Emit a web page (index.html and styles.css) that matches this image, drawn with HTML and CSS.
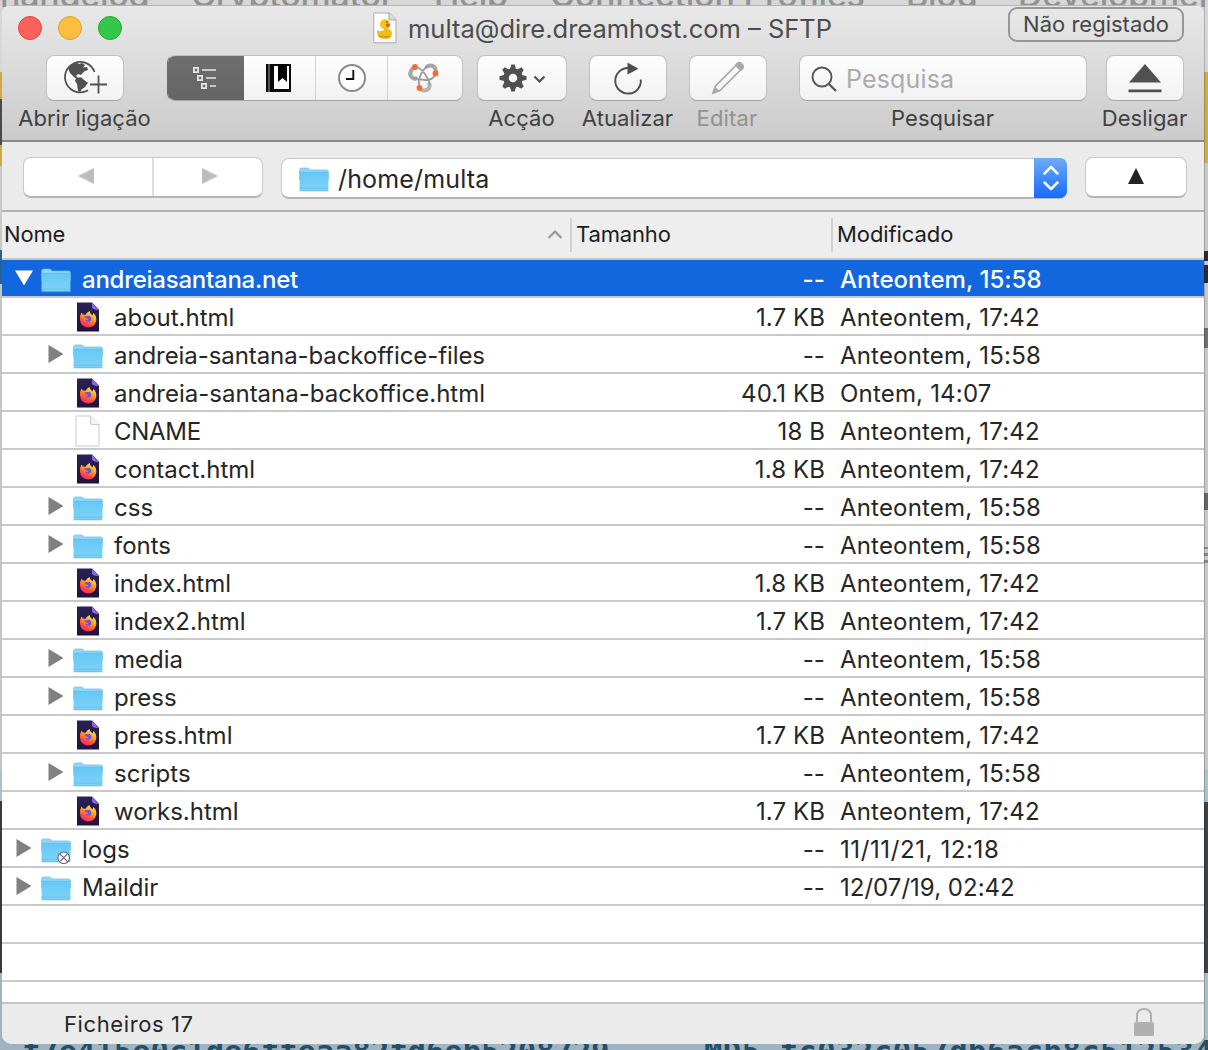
FILE: index.html
```html
<!DOCTYPE html>
<html lang="pt">
<head>
<meta charset="utf-8">
<title>multa@dire.dreamhost.com – SFTP</title>
<link rel="stylesheet" href="styles.css">
</head>
<body>
<svg class="defs" aria-hidden="true">
  <defs>
    <linearGradient id="folderFill" x1="0" y1="0" x2="0" y2="1"><stop offset="0" stop-color="#65c8f6"/><stop offset="1" stop-color="#7fd3f8"/></linearGradient>
    <linearGradient id="fire" x1="0.8" y1="0" x2="0.3" y2="1"><stop offset="0" stop-color="#fff04a"/><stop offset=".45" stop-color="#ff9a22"/><stop offset=".75" stop-color="#ff4a42"/><stop offset="1" stop-color="#ed247c"/></linearGradient>
    <linearGradient id="night" x1="0" y1="0" x2="0" y2="1"><stop offset="0" stop-color="#2b2157"/><stop offset="1" stop-color="#20123a"/></linearGradient>
    <symbol id="folder" viewBox="0 0 32 26">
      <path d="M1 3q0-2 2-2h6q1.500 0 2.300 1.200l.7.800h17q2 0 2 2v8H1z" fill="#8fd6f8" stroke="#62b7e2" stroke-width=".6"/>
      <path d="M1 5.500h30V23.500q0 1-1 1H2q-1 0-1-1z" fill="url(#folderFill)"/>
      <path d="M1 5.500h30M1 22h30" stroke="#5dbbe8" stroke-width=".7"/>
      <path d="M1 24.700h30" stroke="#4eabd9" stroke-width=".9"/>
    </symbol>
    <symbol id="firefox" viewBox="0 0 24 30">
      <path d="M1 .5h15l7 7v22H1z" fill="url(#night)"/>
      <path d="M16 .5l7 7.500q-5 0-7-2z" fill="#8d62e8"/>
      <path d="M4 17.500Q3.800 13 5.500 10.500l1.500 2 2.500.3Q11 10 13.500 9q.2 2.500 3 4.500l1-2.500q3.500 3.500 2.700 8-1.700 6.500-8.200 6.500-7.500-.5-8-8" fill="url(#fire)"/>
      <path d="M8.500 15q1.500-1.500 3.500-.7l1.500-.5q2.300 1.200 1.800 3.700-.8 2.700-3.800 2.200-1.700-.5-2-2 1.800.6 2.800-.8L9 16z" fill="#7850d8"/>
    </symbol>
    <symbol id="blank" viewBox="0 0 26 32">
      <path d="M2 1h13.500l8.500 8.500V30q0 1-1 1H2q-1 0-1-1V2q0-1 1-1z" fill="#fff" stroke="#c9c9c9" stroke-width="1"/>
      <path d="M15.500 1v7q0 1.500 1.500 1.500h7" fill="#f5f5f5" stroke="#c9c9c9"/>
    </symbol>
    <symbol id="right" viewBox="0 0 16 20"><path d="M.5 1l15 9-15 9z" fill="#808080"/></symbol>
    <symbol id="down" viewBox="0 0 18 16"><path d="M0 .5h18L9 15.500z" fill="#fff"/></symbol>
  </defs>
</svg>

<div class="backdrop">
  <div class="edge"></div>
  <div class="menu"><span class="m1">hangelog</span><span class="m2">Cryptomator</span><span class="m3">Help</span><span class="m4">Connection Profiles</span><span class="m5">Blog</span><span class="m6">Development</span></div>
  <div class="hash"><span class="h1">f7e415e0c1de6ffeaa82fd6eb5208729</span><span class="h2">MD5 fc032c057db6acb8c512534</span></div>
</div>

<main class="window">
  <header class="chrome">
    <div class="titlebar">
      <div class="lights"><i class="red"></i><i class="yellow"></i><i class="green"></i></div>
      <div class="title">
        <svg width="24" height="32" viewBox="0 0 24 32"><path d="M.8 1h15.700L23 7.500v23.300H.8z" fill="#fcfcfc" stroke="#aaa"/><path d="M16 1v7h7" fill="#ddd" stroke="#999" stroke-width=".8"/><circle cx="12" cy="12.200" r="5" fill="#f4c51c"/><path d="M4 18q-.5 9 8 9 7.500 0 7-6-.5-3-4-4.500l-3.500-.5-1 2.500q-4 1.500-6.500-.5z" fill="#f1bd18"/><path d="M5.500 23.500q4 3 11.500.5" stroke="#d58c0c" stroke-width="1.300" fill="none"/><path d="M12.500 12q3-1 4.800.5-.8 3-3.500 3z" fill="#ed5c1c"/><circle cx="14" cy="10" r=".8" fill="#332"/></svg>
        <span class="title-text">multa@dire.dreamhost.com – SFTP</span>
      </div>
      <span class="badge">Não registado</span>
    </div>
    <div class="toolbar">
      <div class="tool t-open"><div class="btn">
        <svg width="46" height="36" viewBox="0 0 46 36"><path d="M32.500 12A15.200 15.200 0 1 0 26 30.200" fill="none" stroke="#515151" stroke-width="1.800"/><path d="M6 8q4-4.500 9-5.500l2 1.500 3-1 3 2-2 2.500 4-.5 1 3-4 1.500-3 3.500-3-1-2 2 3 2.500-1 1-4-2.500-4-4zM14 18l5-.8 5 4.300 2 1-3 4.500-3 2-2 3-2-1-1-7-2-3z" fill="#515151"/><path d="M36.500 15.500v18M28 24.500h17" stroke="#515151" stroke-width="1.800"/></svg>
      </div><span class="label">Abrir ligação</span></div>
      <div class="segments">
        <div class="seg on"><svg width="26" height="24" viewBox="0 0 26 24"><g fill="none" stroke="#e8e8e8" stroke-width="1.700"><path d="M1.900 1.900h4.200v4.200H1.900zM5.900 9.900h4.200v4.200H5.900zM9.900 17.900h4.200v4.200H9.900zM10 4h14M14 12h10M18 20h6"/></g></svg></div>
        <div class="seg"><svg width="26" height="28" viewBox="0 0 26 28"><path d="M0 0h25v28H0z" fill="#090909"/><path d="M3 0v28" stroke="#555" stroke-width="2"/><path d="M8 2h15v23H8z" fill="#fff"/><path d="M12 0h9v18l-4.500-4L12 18z" fill="#000"/></svg></div>
        <div class="seg"><svg width="30" height="30" viewBox="0 0 30 30"><circle cx="15" cy="15" r="13" fill="#fff" stroke="#8b8b8b" stroke-width="2"/><path d="M16.300 7v9H9" fill="none" stroke="#111" stroke-width="1.900"/></svg></div>
        <div class="seg"><svg width="32" height="30" viewBox="0 0 32 30"><g fill="none" stroke-linecap="round"><path d="M5 5Q0 11 4 14.500q2 1.500 4 1" stroke="#a6a6a6" stroke-width="4"/><path d="M19 3.500q5-2.500 8 1.500 1 2 .5 4" stroke="#a6a6a6" stroke-width="4"/><path d="M13 26.500q5 2.500 8-1.500 1-2 .5-4" stroke="#b4b4b4" stroke-width="4"/><path d="M8.500 4q5.500 2 9 8 4 6 4 9M27 12q-3 5.500-10 5-7-.5-11-2M19 3.500q-5 4-7 10-2 6-.5 10" stroke="#9c9c9c" stroke-width="1.800"/></g><circle cx="7" cy="4" r="2.900" fill="#f96a34"/><circle cx="27.500" cy="10.500" r="2.900" fill="#f96a34"/><circle cx="11.500" cy="25" r="2.900" fill="#f96a34"/></svg></div>
      </div>
      <div class="tool t-action"><div class="btn">
        <svg width="48" height="28" viewBox="0 0 48 28"><g transform="translate(14 14)"><circle r="7" fill="none" stroke="#505050" stroke-width="5.500"/><g fill="#505050"><path id="tooth" d="M-3.200-8l1.500-5.500h3.400L3.200-8z"/><use href="#tooth" transform="rotate(45)"/><use href="#tooth" transform="rotate(90)"/><use href="#tooth" transform="rotate(135)"/><use href="#tooth" transform="rotate(180)"/><use href="#tooth" transform="rotate(225)"/><use href="#tooth" transform="rotate(270)"/><use href="#tooth" transform="rotate(315)"/></g></g><path d="M35.500 12.500l5 5 5-5" fill="none" stroke="#505050" stroke-width="2.200"/></svg>
      </div><span class="label">Acção</span></div>
      <div class="tool t-refresh"><div class="btn">
        <svg width="30" height="34" viewBox="0 0 30 34"><path d="M15 7A12.800 12.800 0 1 0 27.800 18.500" fill="none" stroke="#4d4d4d" stroke-width="1.900"/><path d="M14.500 1.500l11 6.300-11 5.700z" fill="#4d4d4d"/></svg>
      </div><span class="label">Atualizar</span></div>
      <div class="tool t-edit"><div class="btn">
        <svg width="34" height="34" viewBox="0 0 34 34"><g fill="none" stroke="#a9a9a9" stroke-width="1.700"><path d="M2 32l2.500-7L25 4.500l4.500 4.500L9 29.500z"/></g><path d="M1.500 32.500l2-7 5.500 4.500zM25.500 2q3-2.500 6 .5t.5 6l-2 1.500-6-6z" fill="#a9a9a9"/></svg>
      </div><span class="label dim">Editar</span></div>
      <div class="tool t-search"><div class="btn search">
        <svg width="26" height="26" viewBox="0 0 26 26"><circle cx="11" cy="11" r="9.500" fill="none" stroke="#555" stroke-width="1.900"/><path d="M17.700 17.700l7.300 7.300" stroke="#555" stroke-width="2.200"/></svg><span>Pesquisa</span>
      </div><span class="label">Pesquisar</span></div>
      <div class="tool t-eject"><div class="btn">
        <svg width="34" height="30" viewBox="0 0 34 30"><path d="M17 1l16 18.500H1zM.5 26.500h33v2.800H.5z" fill="#505050"/></svg>
      </div><span class="label">Desligar</span></div>
    </div>
  </header>

  <nav class="pathbar">
    <div class="history"><span><svg width="16" height="16" viewBox="0 0 16 16"><path d="M16 0v16L0 8z" fill="#bdbdbd"/></svg></span><span><svg width="16" height="16" viewBox="0 0 16 16"><path d="M0 0v16l16-8z" fill="#bdbdbd"/></svg></span></div>
    <div class="path"><svg class="folder"><use href="#folder"/></svg><span class="path-text">/home/multa</span>
      <div class="stepper"><svg width="16" height="26" viewBox="0 0 16 26"><path d="M1.500 8.500L8 2l6.500 6.500M1.500 17.500L8 24l6.500-6.500" fill="none" stroke="#fff" stroke-width="2.500" stroke-linecap="round" stroke-linejoin="round"/></svg></div>
    </div>
    <div class="up"><svg width="16" height="16" viewBox="0 0 16 16"><path d="M8 0l8 16H0z" fill="#222"/></svg></div>
  </nav>

  <div class="columns"><div class="c-name"><span>Nome</span><svg width="16" height="11" viewBox="0 0 16 11"><path d="M1.500 9L8 2.500 14.500 9" fill="none" stroke="#999" stroke-width="2.200"/></svg></div><div class="c-size">Tamanho</div><div class="c-date">Modificado</div></div>

  <section class="list">
    <div class="row selected"><svg class="tri-down"><use href="#down"/></svg><svg class="folder"><use href="#folder"/></svg><span class="name">andreiasantana.net</span><span class="size">--</span><span class="date">Anteontem, 15:58</span></div>
    <div class="row child"><i class="tri"></i><svg class="file"><use href="#firefox"/></svg><span class="name">about.html</span><span class="size">1.7 KB</span><span class="date">Anteontem, 17:42</span></div>
    <div class="row child"><svg class="tri"><use href="#right"/></svg><svg class="folder"><use href="#folder"/></svg><span class="name long">andreia-santana-backoffice-files</span><span class="size">--</span><span class="date">Anteontem, 15:58</span></div>
    <div class="row child"><i class="tri"></i><svg class="file"><use href="#firefox"/></svg><span class="name">andreia-santana-backoffice.html</span><span class="size">40.1 KB</span><span class="date">Ontem, 14:07</span></div>
    <div class="row child"><i class="tri"></i><svg class="file blank"><use href="#blank"/></svg><span class="name caps">CNAME</span><span class="size">18 B</span><span class="date">Anteontem, 17:42</span></div>
    <div class="row child"><i class="tri"></i><svg class="file"><use href="#firefox"/></svg><span class="name">contact.html</span><span class="size">1.8 KB</span><span class="date">Anteontem, 17:42</span></div>
    <div class="row child"><svg class="tri"><use href="#right"/></svg><svg class="folder"><use href="#folder"/></svg><span class="name">css</span><span class="size">--</span><span class="date">Anteontem, 15:58</span></div>
    <div class="row child"><svg class="tri"><use href="#right"/></svg><svg class="folder"><use href="#folder"/></svg><span class="name">fonts</span><span class="size">--</span><span class="date">Anteontem, 15:58</span></div>
    <div class="row child"><i class="tri"></i><svg class="file"><use href="#firefox"/></svg><span class="name">index.html</span><span class="size">1.8 KB</span><span class="date">Anteontem, 17:42</span></div>
    <div class="row child"><i class="tri"></i><svg class="file"><use href="#firefox"/></svg><span class="name">index2.html</span><span class="size">1.7 KB</span><span class="date">Anteontem, 17:42</span></div>
    <div class="row child"><svg class="tri"><use href="#right"/></svg><svg class="folder"><use href="#folder"/></svg><span class="name">media</span><span class="size">--</span><span class="date">Anteontem, 15:58</span></div>
    <div class="row child"><svg class="tri"><use href="#right"/></svg><svg class="folder"><use href="#folder"/></svg><span class="name">press</span><span class="size">--</span><span class="date">Anteontem, 15:58</span></div>
    <div class="row child"><i class="tri"></i><svg class="file"><use href="#firefox"/></svg><span class="name">press.html</span><span class="size">1.7 KB</span><span class="date">Anteontem, 17:42</span></div>
    <div class="row child"><svg class="tri"><use href="#right"/></svg><svg class="folder"><use href="#folder"/></svg><span class="name">scripts</span><span class="size">--</span><span class="date">Anteontem, 15:58</span></div>
    <div class="row child"><i class="tri"></i><svg class="file"><use href="#firefox"/></svg><span class="name">works.html</span><span class="size">1.7 KB</span><span class="date">Anteontem, 17:42</span></div>
    <div class="row"><svg class="tri"><use href="#right"/></svg><svg class="folder" viewBox="0 0 32 26"><use href="#folder" width="32" height="26"/><g fill="#fff" stroke="#666" stroke-width="1.100"><circle cx="24" cy="20.500" r="6"/><path d="M20 16.500l8 8M27.500 17l-7 7"/></g></svg><span class="name">logs</span><span class="size">--</span><span class="date wide">11/11/21, 12:18</span></div>
    <div class="row"><svg class="tri"><use href="#right"/></svg><svg class="folder"><use href="#folder"/></svg><span class="name">Maildir</span><span class="size">--</span><span class="date plain">12/07/19, 02:42</span></div>
    <div class="row"></div>
    <div class="row"></div>
  </section>

  <footer class="status"><span>Ficheiros 17</span><svg width="20" height="28" viewBox="0 0 20 28"><path d="M3 15V8q0-7 7-7t7 7v7" fill="none" stroke="#b0b0b0" stroke-width="2"/><rect y="14" width="20" height="14" rx="1.500" fill="#b0b0b0"/></svg></footer>
</main>
</body>
</html>
```
FILE: styles.css
```css
* { box-sizing: border-box; }
body { margin: 0; width: 1208px; height: 1050px; overflow: hidden; padding: 5px 4px 6px 2px; position: relative; font-family: Inter, "Liberation Sans", sans-serif; font-size: 24px; color: #262626; }
.defs { position: absolute; width: 0; height: 0; }
svg { display: block; flex: none; overflow: visible; }

.backdrop { position: absolute; inset: 0; overflow: hidden; background: linear-gradient(#d7d7d7 0 72px, #cfa945 72px 99px, #4b4b4d 99px 145px, #cfa945 145px 166px, #c8c8c8 166px 250px, #286394 250px 284px, #c3c6c8 284px 770px, #a9bfca 770px 801px, #3a3a3d 801px 973px, #9fb4c0 973px); }
.edge { position: absolute; top: 0; right: 0; width: 4px; height: 100%; border-left: 1px solid rgba(0, 0, 0, .2); background: linear-gradient(#d7d7d7 0 72px, #cfac4b 72px 163px, #c8c8c8 163px 251px, #2c2c2c 251px 261px, #c8c8c8 261px 265px, #2c2c2c 265px 283px, #c8c8c8 283px 328px, #707070 328px 348px, #c8c8c8 348px 493px, #666 493px 510px, #c8c8c8 510px 547px, #888 547px 549px, #c8c8c8 549px 553px, #888 553px 556px, #c8c8c8 556px 560px, #888 560px 563px, #c8c8c8 563px 770px, #abc3cc 770px 802px, #404244 802px 973px, #a9bfca 973px); }
.menu span, .hash span { position: absolute; white-space: pre; }
.menu span { top: -27px; font-size: 34px; line-height: 44px; font-weight: 500; color: #929292; letter-spacing: -.25px; }
.m1 { left: 0; } .m2 { left: 191px; } .m3 { left: 434px; } .m4 { left: 550px; } .m5 { left: 906px; } .m6 { left: 1018px; }
.hash span { top: 1034px; font: bold 30.500px/36px "DejaVu Sans Mono", monospace; color: #235068; }
.h1 { left: 22px; } .h2 { left: 704px; letter-spacing: .5px; }

.window { position: relative; height: 1039px; display: flex; flex-direction: column; overflow: hidden; border-radius: 10px; background: #fff; }
.chrome { height: 137px; flex: none; background: linear-gradient(#e8e8e8, #cbcbcb); border-top: 1px solid #b5b5b5; border-bottom: 2px solid #888; }
.titlebar { height: 49px; display: flex; padding: 0 20px 0 16px; }
.lights { display: flex; gap: 16px; padding-top: 10px; width: 355px; }
.lights i { width: 24px; height: 24px; border-radius: 50%; border: 1px solid #e2463f; background: #fc615c; }
.lights .yellow { border-color: #dfa023; background: #fdbe40; }
.lights .green { border-color: #1dab2c; background: #34c84a; }
.title { display: flex; flex: 1; padding-top: 6px; }
.title-text { margin-left: 11px; font-size: 25.500px; line-height: 34px; color: #4c4c4c; white-space: nowrap; }
.badge { width: 176px; height: 35px; margin-top: 1px; border: 2px solid #979797; border-radius: 9px; text-align: center; font-size: 22px; line-height: 31px; color: #474747; }
.toolbar { display: flex; padding-left: 44px; }
.tool { display: flex; flex-direction: column; align-items: center; width: 78px; }
.btn, .segments { height: 46px; border: 1px solid #c1c1c1; border-bottom-color: #a8a8a8; border-radius: 8px; background: linear-gradient(#fdfdfd, #f2f2f2); display: flex; align-items: center; justify-content: center; width: 100%; flex: none; }
.label { font-size: 22px; line-height: 28px; margin-top: 3px; padding-right: 1px; color: #414141; white-space: nowrap; letter-spacing: .06px; }
.label.dim { color: #929292; letter-spacing: .15px; padding-right: 2px; }
.segments { width: 296px; margin-left: 43px; justify-content: flex-start; overflow: hidden; border-left-color: #6a6a6a; }
.seg { height: 100%; width: 72px; border-left: 1px solid #d2d2d2; display: flex; align-items: center; justify-content: center; flex: none; }
.seg.on { width: 76px; border: 0; background: linear-gradient(#6f6f6f, #646464); padding-right: 3px; }
.seg.on + .seg { width: 71px; border-left: 0; padding-right: 1px; }
.seg:last-child { flex: 1; padding-right: 2px; }
.t-action { width: 90px; margin-left: 14px; }
.t-action svg { margin-left: 1px; }
.t-refresh { margin-left: 22px; }
.t-edit { margin-left: 22px; }
.t-search { width: 288px; margin-left: 32px; }
.t-eject { margin-left: 19px; }
.search { justify-content: flex-start; padding-left: 11px; gap: 9px; font-size: 25px; color: #ababab; letter-spacing: .15px; }
.search svg { margin-top: 2px; }
.search span { padding-top: 2px; }

.pathbar { height: 70px; flex: none; display: flex; align-items: flex-start; padding: 15px 17px 0 21px; background: #ebebeb; border-bottom: 2px solid #b1b1b1; }
.history, .path, .up { height: 41px; border: 1px solid #c9c9c9; border-bottom: 2px solid #b5b5b5; border-radius: 8px; background: #fff; display: flex; align-items: center; }
.history { width: 240px; }
.history svg, .up svg { margin-bottom: 2px; }
.history span { flex: 1; height: 100%; display: flex; align-items: center; justify-content: center; padding-right: 5px; }
.history span + span { flex: none; width: 110px; border-left: 2px solid #dedede; padding: 0 0 0 4px; }
.path { width: 786px; margin: 1px 0 0 18px; padding-left: 16px; }
.path-text { margin-left: 8px; padding-top: 2px; font-size: 25px; letter-spacing: .15px; }
.stepper { width: 33px; height: 40px; margin: -1px -1px 0 auto; align-self: flex-start; flex: none; display: flex; align-items: center; justify-content: center; border-radius: 0 7px 7px 0; background: linear-gradient(#6fabfa, #136cfa); }
.up { width: 102px; margin-left: 18px; justify-content: center; }

.columns { height: 48px; flex: none; display: flex; align-items: center; background: #eee; border-bottom: 2px solid #c6c6c6; font-size: 22px; letter-spacing: -.15px; color: #1d1d1d; }
.c-name { width: 568px; display: flex; align-items: center; justify-content: space-between; padding: 0 7px 2px 2px; }
.c-size, .c-date { height: 34px; line-height: 32px; border-left: 2px solid #d0d0d0; padding-left: 4px; }
.c-date { letter-spacing: -.08px; }
.c-size { width: 261px; }
.list { flex: 1; min-height: 0; }
.row { height: 38px; border-bottom: 2px solid #c9c9c9; display: flex; align-items: center; padding-left: 14px; white-space: nowrap; line-height: 32px; }
.row.child { padding-left: 46px; }
.row.selected { background: #1267df; color: #fff; font-weight: 500; }
.tri { width: 16px; height: 20px; margin: 0 8px 0 0; flex: none; }
.tri-down { width: 18px; height: 16px; margin: 0 7px 0 -1px; }
.folder { width: 32px; height: 25px; margin: 5px 0 0; }
.path .folder { margin-top: 2px; }
.file { width: 24px; height: 30px; margin: 1px 4px 0; }
.blank { width: 26px; height: 32px; margin: 2px 3px 0; }
.name, .size, .date { padding-top: 4px; }
.name { margin-left: 10px; flex: 1; }
.name.long { letter-spacing: -.08px; }
.name.caps { letter-spacing: -.3px; }
.selected .name { letter-spacing: -.25px; }
.size { width: 200px; text-align: right; letter-spacing: .1px; }
.date { width: 364px; margin-left: 15px; letter-spacing: .19px; }
.row .size { margin-left: 1px; }
.selected .date, .date.plain { letter-spacing: .02px; }
.date.wide { letter-spacing: .6px; }
.status { height: 42px; flex: none; display: flex; align-items: center; justify-content: space-between; background: #ebebeb; border-top: 2px solid #c4c4c4; padding: 0 50px 4px 62px; font-size: 22px; letter-spacing: .6px; }
.status span { padding-top: 4px; }
```
